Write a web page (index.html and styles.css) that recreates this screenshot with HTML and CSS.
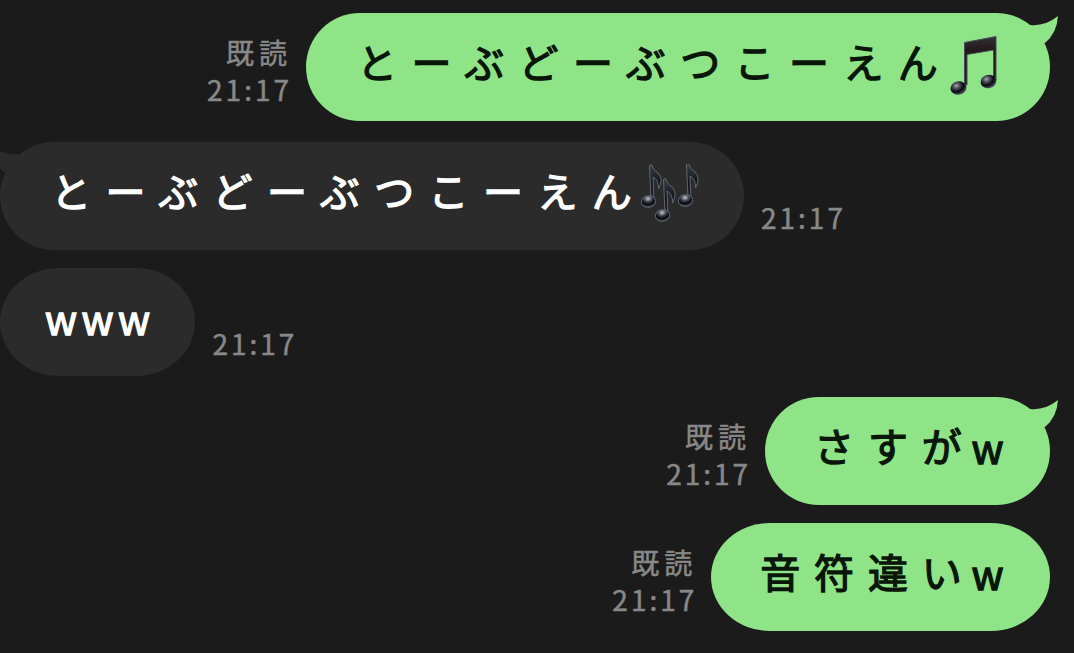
FILE: index.html
```
<!DOCTYPE html>
<html lang="ja">
<head>
    <meta charset="UTF-8" />
    <meta name="viewport" content="width=device-width, initial-scale=1.0" />
    <title>トーク</title>
    <link rel="stylesheet" href="styles.css">
</head>
<body>
    <div class="chat">
        <div class="row me">
            <div class="meta"><span class="read">既読</span><span class="time">21:17</span></div>
            <div class="bubble song">
                <span class="text">とーぶどーぶつこーえん</span>
                <svg class="note" width="48" height="62" viewBox="0 0 48 62">
                    <defs>
                        <linearGradient id="beam" x1="0" y1="0" x2="0" y2="1">
                            <stop offset="0" stop-color="#303038"/>
                            <stop offset=".3" stop-color="#241718"/>
                            <stop offset="1" stop-color="#211b20"/>
                        </linearGradient>
                        <radialGradient id="head" cx=".4" cy=".3" r=".7">
                            <stop offset="0" stop-color="#a2a4ae"/>
                            <stop offset=".3" stop-color="#4c4d59"/>
                            <stop offset=".65" stop-color="#07080e"/>
                            <stop offset="1" stop-color="#555566"/>
                        </radialGradient>
                    </defs>
                    <path d="M14.500 7.500L46 1.500V45H43.500V15L17 19.500V50H14.500Z" fill="url(#beam)" stroke="#4b4d59" stroke-width="1"/>
                    <ellipse cx="8.500" cy="53" rx="8" ry="6.700" transform="rotate(-12 8.500 53)" fill="url(#head)"/>
                    <ellipse cx="38.500" cy="46.500" rx="8" ry="6.700" transform="rotate(-12 38.500 46.500)" fill="url(#head)"/>
                </svg>
                <svg class="tail" width="30" height="32" viewBox="0 0 30 32"><path d="M0 10Q15 11.500 28 1Q27 18 15 28L0 26Z"/></svg>
            </div>
        </div>
        <div class="row you">
            <div class="bubble song">
                <svg class="tail" width="30" height="32" viewBox="0 0 30 32"><path d="M0 10Q15 11.500 28 1Q27 18 15 28L0 26Z"/></svg>
                <span class="text">とーぶどーぶつこーえん</span>
                <svg class="note" width="62" height="62" viewBox="0 0 62 62">
                    <defs>
                        <linearGradient id="stem" x1="0" y1="0" x2="0" y2="1">
                            <stop offset="0" stop-color="#39414d"/>
                            <stop offset=".5" stop-color="#15161c"/>
                            <stop offset="1" stop-color="#23242c"/>
                        </linearGradient>
                        <radialGradient id="shine" cx=".5" cy=".25" r=".75">
                            <stop offset="0" stop-color="#c3c7cc"/>
                            <stop offset=".35" stop-color="#454953"/>
                            <stop offset=".65" stop-color="#07080e"/>
                            <stop offset="1" stop-color="#3e4651"/>
                        </radialGradient>
                        <g id="single" stroke="#646d78" stroke-width=".9">
                            <path d="M10 35L8.500 1.500L10.500 .5Q12 6 17 9Q23 15 17.500 25Q18 16 12 13L13 36Z" fill="url(#stem)"/>
                            <ellipse cx="7.500" cy="37.500" rx="7.200" ry="5.800" transform="rotate(-8 7.500 37.500)" fill="url(#shine)"/>
                        </g>
                    </defs>
                    <use href="#single" x="0" y="0"/>
                    <use href="#single" x="37" y="-1"/>
                    <use href="#single" x="14" y="14"/>
                </svg>
            </div>
            <div class="meta"><span class="time">21:17</span></div>
        </div>
        <div class="row you next">
            <div class="bubble"><span class="latin first">www</span></div>
            <div class="meta"><span class="time">21:17</span></div>
        </div>
        <div class="row me">
            <div class="meta"><span class="read">既読</span><span class="time">21:17</span></div>
            <div class="bubble">
                <span class="text">さすが</span><span class="latin">w</span>
                <svg class="tail" width="30" height="32" viewBox="0 0 30 32"><path d="M0 10Q15 11.500 28 1Q27 18 15 28L0 26Z"/></svg>
            </div>
        </div>
        <div class="row me next">
            <div class="meta"><span class="read">既読</span><span class="time">21:17</span></div>
            <div class="bubble"><span class="text">音符違い</span><span class="latin">w</span></div>
        </div>
    </div>
</body>
</html>
```
FILE: styles.css
```
* {
    box-sizing: border-box;
}
body {
    margin: 0;
    height: 653px;
    overflow: hidden;
    background: #1b1b1b;
    font-family: "Noto Sans CJK JP", sans-serif;
}
.chat {
    display: flex;
    flex-direction: column;
    padding-right: 24px;
    padding-top: 13px;
}
.row {
    display: flex;
    gap: 17px;
    height: 108px;
    margin-bottom: 21px;
}
.row:has(+ .next) {
    margin-bottom: 18px;
}
.me {
    justify-content: flex-end;
}
.bubble {
    position: relative;
    display: flex;
    align-items: flex-start;
    padding: 21px 42px 0 49px;
    border-radius: 54px;
    white-space: nowrap;
    font-size: 40px;
    line-height: 54px;
    -webkit-text-stroke: 1.3px currentColor;
}
.next .bubble {
    border-radius: 59px / 54px;
}
.me .bubble {
    background: #8fe488;
    color: #0b160b;
}
.you .bubble {
    background: #2b2b2b;
    color: #fff;
}
.you.next .bubble {
    padding-right: 41px;
}
/* both song lines are as wide as a bubble can get */
.bubble.song {
    width: 744px;
    padding-left: 51px;
    padding-right: 0;
}
.text {
    letter-spacing: 13.8px;
}
.song .text {
    width: 593px;
    letter-spacing: 14.4px;
}
.latin {
    margin-left: -4px;
    padding-top: 2px;
    letter-spacing: 4.4px;
}
.note {
    display: block;
    flex-shrink: 0;
    margin-top: 1px;
}
.you .note {
    margin-left: -3px;
}
.tail {
    position: absolute;
    top: 2px;
    right: -10px;
    fill: #8fe488;
}
.you .tail {
    left: -11px;
    right: auto;
    transform: scaleX(-1);
    fill: #2b2b2b;
}
.meta {
    display: flex;
    flex-direction: column;
    justify-content: flex-end;
    align-items: flex-end;
    padding-bottom: 13px;
    color: #888;
    font-size: 28px;
    line-height: 37px;
    -webkit-text-stroke: .5px currentColor;
}
.you .meta {
    padding-bottom: 14px;
}
.read {
    letter-spacing: 5px;
    margin-right: -3px;
}
.time {
    letter-spacing: 3px;
    margin-right: -3px;
}
```
